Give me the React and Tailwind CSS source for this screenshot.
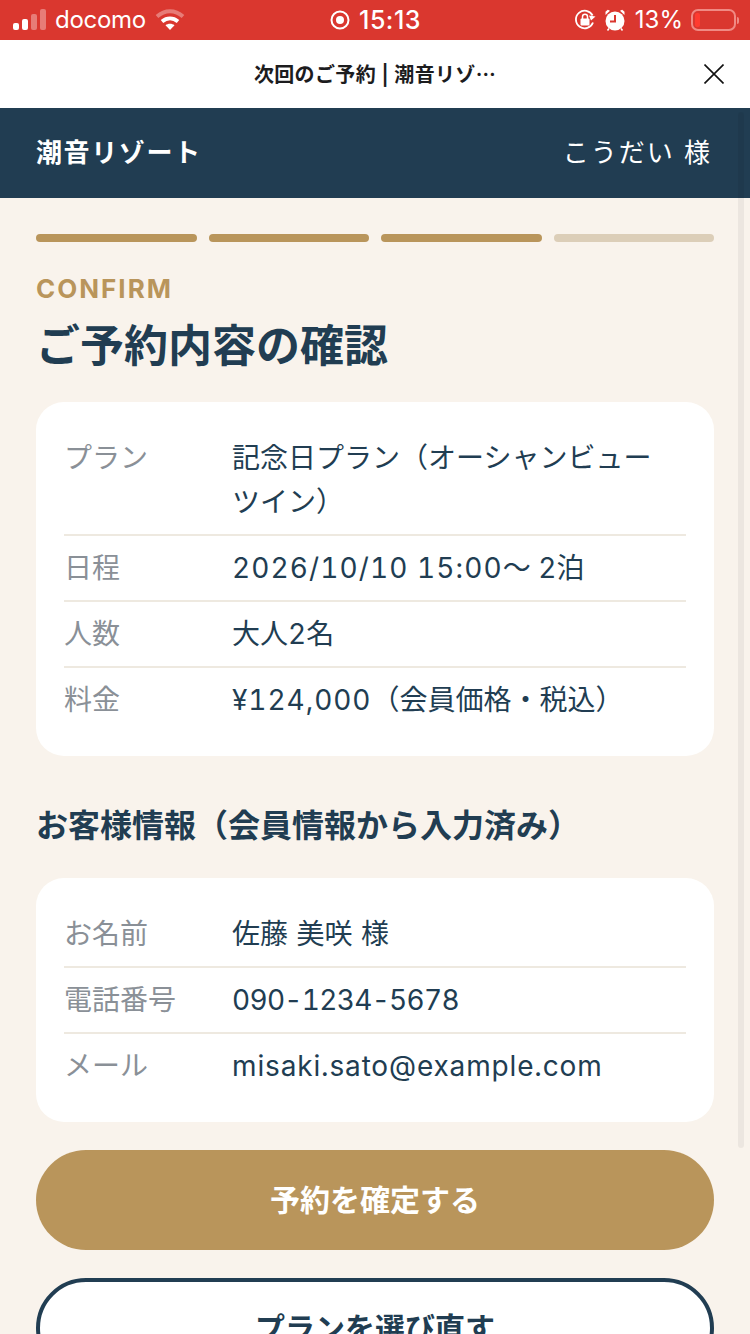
import React from "react";

const font = { fontFamily: 'Inter, "Noto Sans CJK JP", sans-serif' };

const planRows = [
  ["プラン", "記念日プラン（オーシャンビューツイン）"],
  ["日程", <><span className="tracking-[1.1px]">2026/10/10 15:00</span>〜 2泊</>],
  ["人数", "大人2名"],
  ["料金", <><span className="tracking-[0.95px]">¥124,000</span>（会員価格・税込）</>],
];

const guestRows = [
  ["お名前", <span className="[word-spacing:1px]">佐藤 美咲 様</span>],
  ["電話番号", <span className="tracking-[-0.7px]">090-1234-5678</span>],
  ["メール", <span className="tracking-[0.85px]">misaki.sato@example.com</span>],
];

const StatusBar = () => (
  <div className="relative flex h-10 items-center justify-between bg-[#da372f] pl-[13px] pr-[11px] text-white">
    <div className="flex items-center">
      <svg width="33" height="22" viewBox="0 0 33 22" fill="#fff">
        <rect x="0" y="14" width="6" height="7" rx="2" />
        <rect x="9" y="10" width="6" height="11" rx="2" />
        <rect x="18" y="5" width="6" height="16" rx="2" opacity="0.35" />
        <rect x="27" y="0" width="6" height="21" rx="2" opacity="0.35" />
      </svg>
      <span className="ml-[9px] text-[24px] leading-none tracking-[-0.3px]">docomo</span>
      <svg className="ml-[9px]" width="30" height="22" viewBox="0 0 30 22" fill="none" stroke="#fff" strokeWidth="4">
        <path d="M2 7.5C10 0.5 20 0.5 28 7.5" opacity="0.35" />
        <path d="M7 12.5C12 8.5 18 8.5 23 12.5" />
        <path d="M15 21L10.5 16.2C13 14.2 17 14.2 19.5 16.2Z" fill="#fff" stroke="none" />
      </svg>
    </div>
    <div className="absolute left-[330px] top-0 flex h-10 items-center">
      <svg width="20" height="20" viewBox="0 0 20 20" fill="none">
        <circle cx="10" cy="10" r="8.5" stroke="#fff" strokeWidth="2" />
        <circle cx="10" cy="10" r="4" fill="#fff" />
      </svg>
      <span className="ml-[9px] text-[25px] font-medium leading-none tracking-[0.5px]">15:13</span>
    </div>
    <div className="flex items-center">
      <svg width="22" height="22" viewBox="0 0 22 22" fill="none">
        <path d="M19 13.5A8.8 8.8 0 1 1 18.6 6.5" stroke="#fff" strokeWidth="1.8" />
        <path d="M21.5 7.5L17 11.5L15 6.5Z" fill="#fff" />
        <rect x="6.5" y="9.5" width="9" height="7" rx="1" fill="#fff" />
        <path d="M8.5 10V7.8a2.5 2.5 0 0 1 5 0V10" stroke="#fff" strokeWidth="1.5" />
      </svg>
      <svg className="ml-[9px]" width="20" height="22" viewBox="0 0 20 22" fill="none">
        <circle cx="10" cy="12" r="9.5" fill="#fff" />
        <path d="M10 6V12.5H5" stroke="#da372f" strokeWidth="2" />
        <path d="M0.5 6L5 1.8L2.8 0.8L0.5 2.8Z" fill="#fff" />
        <path d="M19.5 6L15 1.8L17.2 0.8L19.5 2.8Z" fill="#fff" />
        <path d="M4 19.5L2.5 21.5M16 19.5L17.5 21.5" stroke="#fff" strokeWidth="1.6" />
      </svg>
      <span className="ml-[10px] text-[24px] leading-none">13%</span>
      <div className="ml-[8px] flex items-center">
        <div className="flex h-[22px] w-[45px] items-center rounded-[7px] border-2 border-[#f08a84] pl-[2px]">
          <div className="h-[14px] w-[5px] rounded-[2px] bg-[#ff3b30]" />
        </div>
        <div className="ml-[1px] h-[7px] w-[2px] rounded-r-sm bg-[#f08a84]" />
      </div>
    </div>
  </div>
);

const InfoCard = ({ rows }) => (
  <div className="rounded-[28px] bg-white px-7 py-[22px]">
    {rows.map(([label, value], i) => (
      <div
        key={label}
        className={`flex text-[28px] leading-[44px] ${i === 0 ? "pt-[12px]" : "pt-[10px]"} ${
          i < rows.length - 1 ? "border-b-2 border-[#eee9e0] pb-[10px]" : "pb-[12px]"
        }`}
      >
        <div className="w-[168px] shrink-0 text-[#8a9097]">{label}</div>
        <div className="w-[430px] text-[#213d52] tabular-nums">{value}</div>
      </div>
    ))}
  </div>
);

export default function App() {
  return (
    <div className="relative h-[1334px] overflow-hidden bg-[#f9f3ec]" style={font}>
      <StatusBar />

      <div className="relative flex h-[68px] items-center justify-center bg-white">
        <span className="text-[20px] font-semibold tracking-[0.35px] text-[#1c1c1e]">
          次回のご予約 | 潮音リゾ<span className="font-['Noto_Sans_CJK_JP']">…</span>
        </span>
        <svg className="absolute right-[26px] top-[24px]" width="20" height="20" viewBox="0 0 20 20" stroke="#111" strokeWidth="1.6">
          <path d="M0.5 0.5L19.5 19.5M19.5 0.5L0.5 19.5" />
        </svg>
      </div>

      <header className="flex h-[90px] items-center justify-between bg-[#213d52] pb-[2px] pl-[36px] pr-[38px] text-white">
        <span className="text-[26px] font-bold tracking-[1.6px]">潮音リゾート</span>
        <span className="text-[26px] tracking-[2px]">こうだい 様</span>
      </header>

      <main className="px-9 pt-9">
        <div className="flex gap-3">
          <div className="h-2 flex-1 rounded-full bg-[#b9955b]" />
          <div className="h-2 flex-1 rounded-full bg-[#b9955b]" />
          <div className="h-2 flex-1 rounded-full bg-[#b9955b]" />
          <div className="h-2 flex-1 rounded-full bg-[#dcceb8]" />
        </div>

        <p className="mt-[28px] text-[26px] font-bold leading-[38px] tracking-[2px] text-[#b9955b]">CONFIRM</p>
        <h1 className="mt-[8px] text-[44px] font-bold leading-[60px] text-[#213d52]">ご予約内容の確認</h1>

        <div className="mt-[26px]">
          <InfoCard rows={planRows} />
        </div>

        <h2 className="mt-[47px] text-[32px] font-bold leading-[46px] text-[#213d52]">お客様情報（会員情報から入力済み）</h2>

        <div className="mt-[29px]">
          <InfoCard rows={guestRows} />
        </div>

        <button className="mt-7 flex h-[100px] w-full items-center justify-center rounded-[50px] bg-[#b9955b] text-[30px] font-bold text-white">
          予約を確定する
        </button>
        <button className="mt-7 flex h-[100px] w-full items-center justify-center rounded-[50px] border-4 border-[#213d52] bg-white text-[30px] font-bold text-[#213d52]">
          プランを選び直す
        </button>
      </main>

      {/* scrollbar overlay */}
      <div className="absolute right-[6px] top-[112px] h-[1036px] w-[6px] rounded-full bg-black/5" />
    </div>
  );
}
